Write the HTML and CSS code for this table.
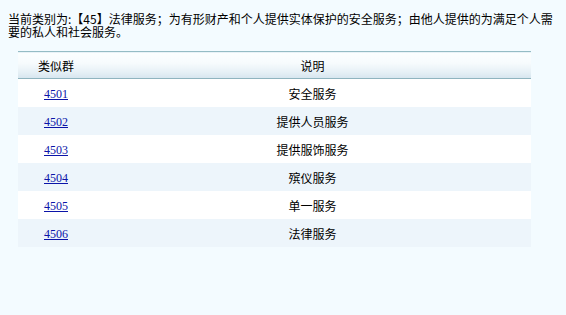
FILE: index.html
```html
<!DOCTYPE html>
<html lang="zh-CN">
<head>
<meta charset="utf-8">
<title>类似群</title>
<link rel="stylesheet" href="styles.css">
</head>
<body>
<div class="page">
  <p class="intro">当前类别为:【45】法律服务；为有形财产和个人提供实体保护的安全服务；由他人提供的为满足个人需要的私人和社会服务。</p>
  <table class="groups">
    <thead>
      <tr><th class="c1">类似群</th><th class="c2">说明</th></tr>
    </thead>
    <tbody>
      <tr><td class="c1"><a href="#">4501</a></td><td>安全服务</td></tr>
      <tr class="alt"><td class="c1"><a href="#">4502</a></td><td>提供人员服务</td></tr>
      <tr><td class="c1"><a href="#">4503</a></td><td>提供服饰服务</td></tr>
      <tr class="alt"><td class="c1"><a href="#">4504</a></td><td>殡仪服务</td></tr>
      <tr><td class="c1"><a href="#">4505</a></td><td>单一服务</td></tr>
      <tr class="alt"><td class="c1"><a href="#">4506</a></td><td>法律服务</td></tr>
    </tbody>
  </table>
</div>
</body>
</html>
```
FILE: styles.css
```css
html, body {
  margin: 0;
  padding: 0;
  background: #f3fbff;
}
body {
  font-family: "Noto Sans CJK SC", "Noto Sans", sans-serif;
  font-size: 12px;
  color: #000;
  width: 566px;
  height: 315px;
  overflow: hidden;
}
.page {
  padding: 12px 8px 0 8px;
}
.intro {
  margin: 0;
  line-height: 13px;
}
.groups {
  margin: 13px 0 0 10px;
  width: 513px;
  border-collapse: collapse;
  border-spacing: 0;
}
.groups th {
  height: 26px;
  padding: 0;
  font-weight: normal;
  text-align: center;
  vertical-align: middle;
  border-top: 1px solid #95bcc5;
  border-bottom: 1px solid #8fb4bf;
  background: linear-gradient(to bottom, #fbfeff 0%, #f7fbfd 40%, #e6f0f6 75%, #d6e5ee 100%);
}
.groups td {
  height: 28px;
  padding: 0;
  text-align: center;
  vertical-align: middle;
  background: #ffffff;
}
.groups tr.alt td {
  background: #edf5fb;
}
.groups .c1 {
  width: 76px;
}
.groups a {
  color: #0b14a8;
  text-decoration: underline;
  font-family: "Liberation Serif", "Noto Sans CJK SC", serif;
  font-size: 12px;
}
```
